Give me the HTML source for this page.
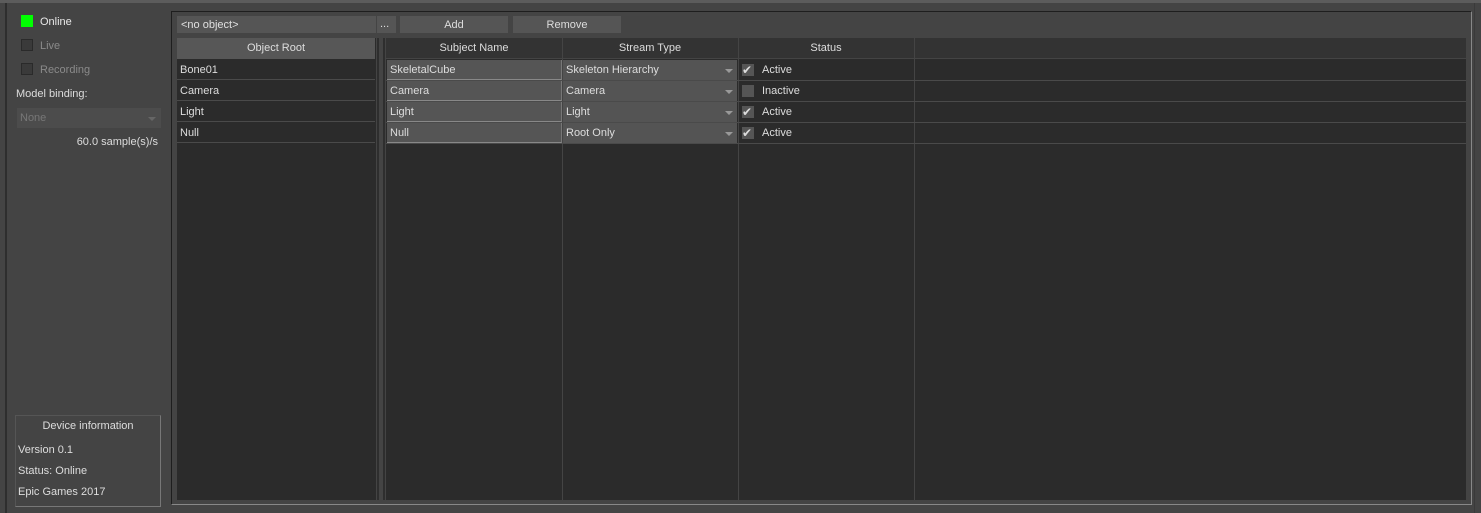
<!DOCTYPE html>
<html><head><style>
*{box-sizing:border-box;margin:0;padding:0}
body{width:1481px;height:513px;background:#444;font-family:"Liberation Sans",Arial,sans-serif;font-size:11px;color:#ddd;position:relative;overflow:hidden}
.a{position:absolute}
.t{position:absolute;white-space:nowrap;line-height:22px}
.row{position:absolute;height:20px;background:#2b2b2b;border-bottom:1px solid #4a4a4a}
.cb{position:absolute;width:12px;height:12px;background:#3a3a3a;border:1px solid #2a2a2a}
</style></head><body>
<div class="a" style="left:0;top:0;width:1481px;height:3px;background:#5c5c5c"></div>
<div class="a" style="left:5px;top:3px;width:2px;height:510px;background:#2e2e2e"></div>
<div class="a" style="left:1474px;top:3px;width:1px;height:510px;background:#3a3a3a"></div>
<!-- left panel -->
<div class="a" style="left:21px;top:15px;width:12px;height:12px;background:#00ff00"></div>
<div class="t" style="left:40px;top:11px;color:#e8e8e8">Online</div>
<div class="cb" style="left:21px;top:39px"></div>
<div class="t" style="left:40px;top:35px;color:#8a8a8a">Live</div>
<div class="cb" style="left:21px;top:63px"></div>
<div class="t" style="left:40px;top:59px;color:#8a8a8a">Recording</div>
<div class="t" style="left:16px;top:83px">Model binding:</div>
<div class="a" style="left:17px;top:108px;width:144px;height:20px;background:#4c4c4c"></div>
<div class="t" style="left:20px;top:107px;color:#777">None</div>
<div class="a" style="left:148px;top:117px;width:0;height:0;border-left:4px solid transparent;border-right:4px solid transparent;border-top:4px solid #666"></div>
<div class="t" style="left:60px;top:131px;width:98px;text-align:right">60.0 sample(s)/s</div>
<div class="a" style="left:15px;top:415px;width:146px;height:92px;border:1px solid #777;border-top-color:#555;border-left-color:#555"></div>
<div class="t" style="left:15px;top:415px;width:146px;text-align:center">Device information</div>
<div class="t" style="left:18px;top:439px">Version 0.1</div>
<div class="t" style="left:18px;top:460px">Status: Online</div>
<div class="t" style="left:18px;top:481px">Epic Games 2017</div>
<!-- main panel -->
<div class="a" style="left:171px;top:11px;width:1301px;height:494px;border:1px solid #888;border-top:1px solid #1e1e1e;border-left:1px solid #1e1e1e;background:#444"></div>
<div class="a" style="left:177px;top:16px;width:199px;height:17px;background:#555"></div>
<div class="t" style="left:181px;top:14px;color:#e0e0e0">&lt;no object&gt;</div>
<div class="a" style="left:377px;top:16px;width:19px;height:17px;background:#555"></div>
<div class="t" style="left:380px;top:13px">...</div>
<div class="a" style="left:400px;top:16px;width:108px;height:17px;background:#555;text-align:center;line-height:19px">Add</div>
<div class="a" style="left:513px;top:16px;width:108px;height:17px;background:#555;text-align:center;line-height:19px">Remove</div>
<!-- object root -->
<div class="a" style="left:177px;top:38px;width:199px;height:462px;background:#2b2b2b"></div>
<div class="a" style="left:177px;top:38px;width:198px;height:21px;background:#575757;text-align:center;line-height:21px">Object Root</div>
<div class="row" style="left:177px;top:60px;width:198px"></div><div class="t" style="left:180px;top:59px">Bone01</div>
<div class="row" style="left:177px;top:81px;width:198px"></div><div class="t" style="left:180px;top:80px">Camera</div>
<div class="row" style="left:177px;top:102px;width:198px"></div><div class="t" style="left:180px;top:101px">Light</div>
<div class="row" style="left:177px;top:123px;width:198px"></div><div class="t" style="left:180px;top:122px">Null</div>
<div class="a" style="left:377px;top:38px;width:2px;height:462px;background:#2e2e2e"></div>
<div class="a" style="left:383px;top:38px;width:2px;height:462px;background:#2e2e2e"></div>
<!-- subject table -->
<div class="a" style="left:386px;top:38px;width:1080px;height:462px;background:#2b2b2b"></div>
<div class="a" style="left:386px;top:38px;width:1080px;height:20px;background:#333"></div>
<div class="a" style="left:386px;top:58px;width:1080px;height:1px;background:#444"></div>
<div class="a" style="left:562px;top:38px;width:1px;height:462px;background:#444"></div>
<div class="a" style="left:738px;top:38px;width:1px;height:462px;background:#444"></div>
<div class="a" style="left:914px;top:38px;width:1px;height:462px;background:#444"></div>
<div class="t" style="left:386px;top:37px;width:176px;text-align:center">Subject Name</div>
<div class="t" style="left:562px;top:37px;width:176px;text-align:center">Stream Type</div>
<div class="t" style="left:738px;top:37px;width:176px;text-align:center">Status</div>
<div class="a" style="left:386px;top:80px;width:1080px;height:1px;background:#4a4a4a"></div>
<div class="a" style="left:386px;top:101px;width:1080px;height:1px;background:#4a4a4a"></div>
<div class="a" style="left:386px;top:122px;width:1080px;height:1px;background:#4a4a4a"></div>
<div class="a" style="left:386px;top:143px;width:1080px;height:1px;background:#4a4a4a"></div>
<!-- rows -->
<div class="a" style="left:387px;top:60px;width:175px;height:20px;background:#555;border-bottom:1px solid #888;border-right:1px solid #777"></div><div class="t" style="left:390px;top:59px">SkeletalCube</div>
<div class="a" style="left:387px;top:81px;width:175px;height:20px;background:#555;border-bottom:1px solid #888;border-right:1px solid #777"></div><div class="t" style="left:390px;top:80px">Camera</div>
<div class="a" style="left:387px;top:102px;width:175px;height:20px;background:#555;border-bottom:1px solid #888;border-right:1px solid #777"></div><div class="t" style="left:390px;top:101px">Light</div>
<div class="a" style="left:387px;top:123px;width:175px;height:20px;background:#555;border-bottom:1px solid #888;border-right:1px solid #777"></div><div class="t" style="left:390px;top:122px">Null</div>
<div class="a" style="left:563px;top:60px;width:174px;height:20px;background:#545454"></div><div class="t" style="left:566px;top:59px">Skeleton Hierarchy</div>
<div class="a" style="left:563px;top:81px;width:174px;height:20px;background:#545454"></div><div class="t" style="left:566px;top:80px">Camera</div>
<div class="a" style="left:563px;top:102px;width:174px;height:20px;background:#545454"></div><div class="t" style="left:566px;top:101px">Light</div>
<div class="a" style="left:563px;top:123px;width:174px;height:20px;background:#545454"></div><div class="t" style="left:566px;top:122px">Root Only</div>
<div class="a" style="left:725px;top:69px;border-left:4px solid transparent;border-right:4px solid transparent;border-top:4px solid #999"></div>
<div class="a" style="left:725px;top:90px;border-left:4px solid transparent;border-right:4px solid transparent;border-top:4px solid #999"></div>
<div class="a" style="left:725px;top:111px;border-left:4px solid transparent;border-right:4px solid transparent;border-top:4px solid #999"></div>
<div class="a" style="left:725px;top:132px;border-left:4px solid transparent;border-right:4px solid transparent;border-top:4px solid #999"></div>
<div class="cb" style="left:742px;top:64px;background:#555;border-color:#555"></div><div class="t" style="left:742px;top:59px;font-size:12px;color:#ddd">✔</div><div class="t" style="left:762px;top:59px">Active</div>
<div class="cb" style="left:742px;top:85px;background:#555;border-color:#555"></div><div class="t" style="left:762px;top:80px">Inactive</div>
<div class="cb" style="left:742px;top:106px;background:#555;border-color:#555"></div><div class="t" style="left:742px;top:101px;font-size:12px;color:#ddd">✔</div><div class="t" style="left:762px;top:101px">Active</div>
<div class="cb" style="left:742px;top:127px;background:#555;border-color:#555"></div><div class="t" style="left:742px;top:122px;font-size:12px;color:#ddd">✔</div><div class="t" style="left:762px;top:122px">Active</div>
</body></html>
